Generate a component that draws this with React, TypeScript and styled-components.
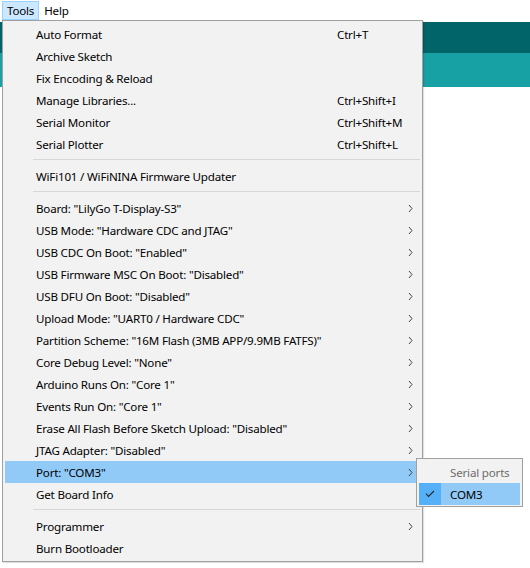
import { styled, createGlobalStyle } from 'styled-components'

const GlobalStyle = createGlobalStyle`
  html, body {
    margin: 0;
    padding: 0;
    background: #ffffff;
  }
  body {
    font-family: 'Noto Sans', 'Liberation Sans', sans-serif;
    font-size: 11.6px;
    letter-spacing: -0.2px;
    color: #000;
  }
`

type MenuEntry =
  | { kind: 'sep' }
  | { kind: 'item'; label: string; shortcut?: string; sub?: boolean; active?: boolean }

const entries: MenuEntry[] = [
  { kind: 'item', label: 'Auto Format', shortcut: 'Ctrl+T' },
  { kind: 'item', label: 'Archive Sketch' },
  { kind: 'item', label: 'Fix Encoding & Reload' },
  { kind: 'item', label: 'Manage Libraries...', shortcut: 'Ctrl+Shift+I' },
  { kind: 'item', label: 'Serial Monitor', shortcut: 'Ctrl+Shift+M' },
  { kind: 'item', label: 'Serial Plotter', shortcut: 'Ctrl+Shift+L' },
  { kind: 'sep' },
  { kind: 'item', label: 'WiFi101 / WiFiNINA Firmware Updater' },
  { kind: 'sep' },
  { kind: 'item', label: 'Board: "LilyGo T-Display-S3"', sub: true },
  { kind: 'item', label: 'USB Mode: "Hardware CDC and JTAG"', sub: true },
  { kind: 'item', label: 'USB CDC On Boot: "Enabled"', sub: true },
  { kind: 'item', label: 'USB Firmware MSC On Boot: "Disabled"', sub: true },
  { kind: 'item', label: 'USB DFU On Boot: "Disabled"', sub: true },
  { kind: 'item', label: 'Upload Mode: "UART0 / Hardware CDC"', sub: true },
  { kind: 'item', label: 'Partition Scheme: "16M Flash (3MB APP/9.9MB FATFS)"', sub: true },
  { kind: 'item', label: 'Core Debug Level: "None"', sub: true },
  { kind: 'item', label: 'Arduino Runs On: "Core 1"', sub: true },
  { kind: 'item', label: 'Events Run On: "Core 1"', sub: true },
  { kind: 'item', label: 'Erase All Flash Before Sketch Upload: "Disabled"', sub: true },
  { kind: 'item', label: 'JTAG Adapter: "Disabled"', sub: true },
  { kind: 'item', label: 'Port: "COM3"', sub: true, active: true },
  { kind: 'item', label: 'Get Board Info' },
  { kind: 'sep' },
  { kind: 'item', label: 'Programmer', sub: true },
  { kind: 'item', label: 'Burn Bootloader' },
]

const Page = styled.div`
  position: relative;
  width: 530px;
  height: 568px;
  overflow: hidden;
  background: #fff;
`

const MenuBar = styled.div`
  display: flex;
  height: 22px;
  padding-left: 2px;
  background: #fff;
`

const MenuTitle = styled.div<{ $open?: boolean }>`
  height: 19px;
  margin-top: 1px;
  padding: 0 4px;
  box-sizing: border-box;
  display: flex;
  align-items: center;
  border: 1px solid ${(p) => (p.$open ? '#99d1ff' : 'transparent')};
  background: ${(p) => (p.$open ? '#cce8ff' : 'transparent')};
`

const Toolbar = styled.div`
  height: 31px;
  background: #006468;
`

const Header = styled.div`
  height: 34px;
  background: #17a1a5;
`

const Dropdown = styled.div`
  position: absolute;
  left: 2px;
  top: 20px;
  width: 421px;
  box-sizing: border-box;
  padding: 2px;
  background: #f2f2f2;
  border: 1px solid #a0a0a0;
  box-shadow: 1px 1px 1px rgba(0, 0, 0, 0.12);
`

const Row = styled.div<{ $active?: boolean }>`
  position: relative;
  display: grid;
  grid-template-columns: 301px 1fr 12px;
  align-items: center;
  height: 22px;
  padding-left: 31px;
  background: ${(p) => (p.$active ? '#91c9f7' : 'transparent')};
`

const Label = styled.span`
  white-space: nowrap;
`

const Shortcut = styled.span`
  white-space: nowrap;
`

const Separator = styled.div`
  height: 10px;
  display: flex;
  align-items: flex-start;
  padding: 4px 0 0 28px;
  box-sizing: border-box;
  &::after {
    content: '';
    flex: 1;
    height: 1px;
    background: #d7d7d7;
  }
`

const Chevron = () => (
  <svg width="6" height="9" viewBox="0 0 6 9">
    <polyline points="1,1 4,4.5 1,8" fill="none" stroke="#444" strokeWidth="1" />
  </svg>
)

const SubMenu = styled.div`
  position: absolute;
  left: 411px;
  top: -3px;
  width: 107px;
  box-sizing: border-box;
  padding: 2px 2px 1px;
  background: #f2f2f2;
  border: 1px solid #a0a0a0;
  z-index: 2;
`

const SubRow = styled.div<{ $active?: boolean; $muted?: boolean }>`
  display: flex;
  align-items: center;
  height: 22px;
  color: ${(p) => (p.$muted ? '#6d6d6d' : '#000')};
  background: ${(p) => (p.$active ? '#91c9f7' : 'transparent')};
`

const CheckGutter = styled.div<{ $checked?: boolean }>`
  width: 22px;
  height: 100%;
  margin-right: 9px;
  display: flex;
  align-items: center;
  justify-content: center;
  background: ${(p) => (p.$checked ? '#56b0f8' : 'transparent')};
`

const Check = () => (
  <svg width="10" height="8" viewBox="0 0 10 8">
    <polyline points="1,3.5 3.5,6.5 9,1" fill="none" stroke="#222" strokeWidth="1.1" />
  </svg>
)

function PortMenu() {
  return (
    <SubMenu>
      <SubRow $muted>
        <CheckGutter />
        Serial ports
      </SubRow>
      <SubRow $active>
        <CheckGutter $checked>
          <Check />
        </CheckGutter>
        COM3
      </SubRow>
    </SubMenu>
  )
}

export default function App() {
  return (
    <Page>
      <GlobalStyle />
      <MenuBar>
        <MenuTitle $open>Tools</MenuTitle>
        <MenuTitle>Help</MenuTitle>
      </MenuBar>
      <Toolbar />
      <Header />
      <Dropdown>
        {entries.map((e, i) =>
          e.kind === 'sep' ? (
            <Separator key={i} />
          ) : (
            <Row key={i} $active={e.active}>
              <Label>{e.label}</Label>
              <Shortcut>{e.shortcut}</Shortcut>
              {e.sub ? <Chevron /> : <span />}
              {e.active && <PortMenu />}
            </Row>
          )
        )}
      </Dropdown>
    </Page>
  )
}
